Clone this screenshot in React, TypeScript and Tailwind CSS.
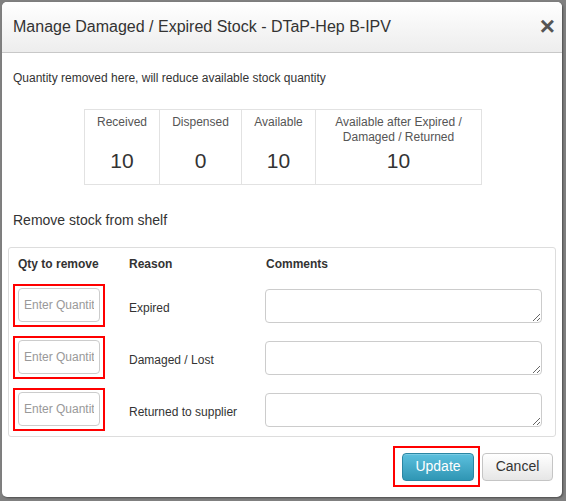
import React from "react";

const rows = ["Expired", "Damaged / Lost", "Returned to supplier"];

const stats = [
  { label: "Received", value: "10", w: "w-[74px]" },
  { label: "Dispensed", value: "0", w: "w-[82px]" },
  { label: "Available", value: "10", w: "w-[74px]" },
  { label: "Available after Expired / Damaged / Returned", value: "10", w: "w-[166px]" },
];

export default function App() {
  return (
    <div
      className="w-[566px] h-[501px] bg-[#808080] pt-[2px] pl-[2px] overflow-hidden"
      style={{ fontFamily: '"Liberation Sans", Arial, sans-serif' }}
    >
      <div className="w-[560px] h-[495px] bg-white rounded-[5px] flex flex-col shadow-[1px_1px_2px_rgba(0,0,0,0.4)]">
        {/* header */}
        <div className="h-[51px] flex items-center justify-between pl-[11px] pr-[9px] rounded-t-[5px] bg-gradient-to-b from-white to-[#ededed] border-b border-[#c8c8c8]">
          <h3 className="text-[16px] text-[#333] leading-none mt-[-1px]">
            Manage Damaged / Expired Stock - DTaP-Hep B-IPV
          </h3>
          <span className="text-[26px] font-bold text-[#555] leading-none mt-[-2px] mr-[-2px]">×</span>
        </div>

        <div className="px-[11px]">
          <p className="text-[12px] text-[#333] mt-[16px] leading-[18px]">
            Quantity removed here, will reduce available stock quantity
          </p>

          <div className="flex justify-center mt-[22px] ml-[2px]">
            <div className="flex border border-[#e2e2e2]">
              {stats.map((s, i) => (
                <div
                  key={s.label}
                  className={`${s.w} h-[74px] text-center pt-[5px] ${i > 0 ? "border-l border-[#e2e2e2]" : ""}`}
                >
                  <div className="text-[12px] text-[#555] leading-[15px] h-[32px] px-[8px]">{s.label}</div>
                  <div className="text-[21px] text-[#333] leading-[24px] mt-[2px]">{s.value}</div>
                </div>
              ))}
            </div>
          </div>

          <p className="text-[14px] text-[#333] mt-[26px] leading-[18px]">Remove stock from shelf</p>
        </div>

        <div className="mx-[6px] mt-[18px] border border-[#ddd] rounded-[3px] h-[190px] px-[4px] pt-[9px]">
          <div className="flex text-[12px] font-bold text-[#333] leading-[15px] h-[22px]">
            <div className="w-[111px] pl-[5px]">Qty to remove</div>
            <div className="w-[137px] pl-[5px]">Reason</div>
            <div className="pl-[5px]">Comments</div>
          </div>
          {rows.map((r) => (
            <div key={r} className="flex items-center h-[52px]">
              <div className="w-[111px]">
                <div className="w-[92px] h-[43px] border-2 border-[#ff0000] flex items-center pl-[3px]">
                  <input
                    className="w-[82px] h-[34px] border border-[#ccc] rounded-[4px] px-[5px] text-[12px] text-[#333] placeholder-[#999] outline-none"
                    placeholder="Enter Quantity"
                  />
                </div>
              </div>
              <div className="w-[137px] pl-[5px] text-[12px] text-[#333] mt-[5px]">{r}</div>
              <textarea className="w-[277px] h-[34px] border border-[#ccc] rounded-[4px] ml-[4px] mt-[2px] outline-none text-[12px]" />
            </div>
          ))}
        </div>

        <div className="flex justify-end items-center mt-[9px] pr-[9px] gap-[2px]">
          <div className="border-2 border-[#ff0000] w-[87px] h-[41px] flex items-center justify-end pr-[4px]">
            <button className="w-[72px] h-[28px] rounded-[4px] text-white text-[14px] bg-gradient-to-b from-[#5bc0de] to-[#2f96b4] border border-[#2a86a3] shadow-[inset_0_1px_0_rgba(255,255,255,0.2)]">
              Update
            </button>
          </div>
          <button className="w-[71px] h-[28px] rounded-[4px] text-[#333] text-[14px] bg-gradient-to-b from-white to-[#e6e6e6] border border-[#c5c5c5]">
            Cancel
          </button>
        </div>
      </div>
    </div>
  );
}
